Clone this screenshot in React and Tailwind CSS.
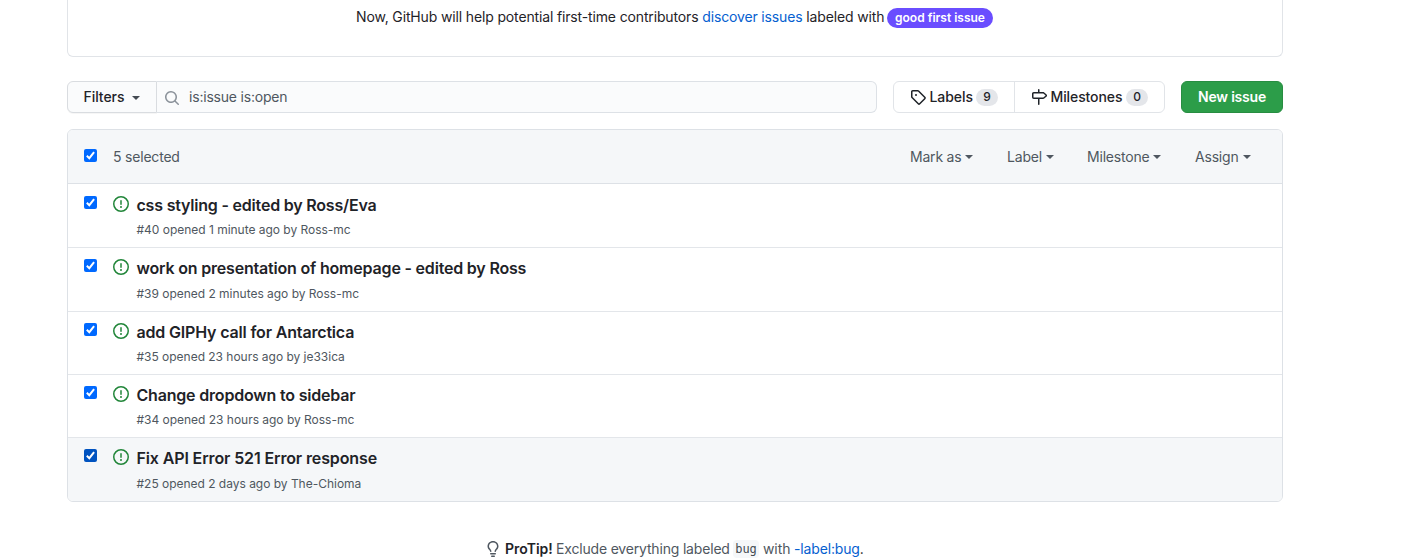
import React from "react";

const PATHS = {
  issue:
    "M8 1.5a6.5 6.5 0 100 13 6.5 6.5 0 000-13zM0 8a8 8 0 1116 0A8 8 0 010 8zm9 3a1 1 0 11-2 0 1 1 0 012 0zm-.25-6.25a.75.75 0 00-1.5 0v3.5a.75.75 0 001.5 0v-3.5z",
  tag: "M2.5 7.775V2.75a.25.25 0 01.25-.25h5.025a.25.25 0 01.177.073l6.25 6.25a.25.25 0 010 .354l-5.025 5.025a.25.25 0 01-.354 0l-6.25-6.25a.25.25 0 01-.073-.177zm-1.5 0V2.75C1 1.784 1.784 1 2.75 1h5.025c.464 0 .91.184 1.238.513l6.25 6.25a1.75 1.75 0 010 2.474l-5.026 5.026a1.75 1.75 0 01-2.474 0l-6.25-6.25A1.75 1.75 0 011 7.775zM6 5a1 1 0 100 2 1 1 0 000-2z",
  milestone:
    "M7.75 0a.75.75 0 01.75.75V3h3.634c.414 0 .814.147 1.13.414l2.07 1.75a1.75 1.75 0 010 2.672l-2.07 1.75a1.75 1.75 0 01-1.13.414H8.5v5.25a.75.75 0 11-1.5 0V10H2.75A1.75 1.75 0 011 8.25v-3.5C1 3.784 1.784 3 2.75 3H7V.75A.75.75 0 017.75 0zm0 8.5h4.384a.25.25 0 00.161-.06l2.07-1.75a.25.25 0 000-.38l-2.07-1.75a.25.25 0 00-.161-.06H2.75a.25.25 0 00-.25.25v3.5c0 .138.112.25.25.25h5z",
  search:
    "M11.5 7a4.499 4.499 0 11-8.998 0A4.499 4.499 0 0111.5 7zm-.82 4.74a6 6 0 111.06-1.06l3.04 3.04a.75.75 0 11-1.06 1.06l-3.04-3.04z",
  bulb: "M8 1.5c-2.363 0-4 1.69-4 3.75 0 .984.424 1.625.984 2.304l.214.253c.223.264.47.556.673.848.284.411.537.896.621 1.49a.75.75 0 01-1.484.211c-.04-.282-.163-.547-.37-.847a8.695 8.695 0 00-.542-.68c-.084-.1-.173-.205-.268-.32C3.201 7.75 2.5 6.766 2.5 5.25 2.5 2.31 4.863 0 8 0s5.5 2.31 5.5 5.25c0 1.516-.701 2.5-1.328 3.259-.095.115-.184.22-.268.319-.207.245-.383.453-.541.681-.208.3-.33.565-.37.847a.75.75 0 01-1.485-.212c.084-.593.337-1.078.621-1.489.203-.292.45-.584.673-.848.075-.088.147-.173.213-.253.561-.679.985-1.32.985-2.304 0-2.06-1.637-3.75-4-3.75zM6 15.25a.75.75 0 01.75-.75h2.5a.75.75 0 010 1.5h-2.5a.75.75 0 01-.75-.75zM5.75 12a.75.75 0 000 1.5h4.5a.75.75 0 000-1.5h-4.5z",
};

function Icon({ name, className }) {
  return (
    <svg viewBox="0 0 16 16" fill="currentColor" className={`size-4 shrink-0 ${className || ""}`}>
      <path fillRule="evenodd" d={PATHS[name]} />
    </svg>
  );
}

function Caret({ className }) {
  return (
    <svg viewBox="0 0 8 4" fill="currentColor" className={`h-1 w-2 shrink-0 ${className || ""}`}>
      <path d="M0 0h8L4 4z" />
    </svg>
  );
}

function Checkbox({ active }) {
  return (
    <span
      role="checkbox"
      aria-checked="true"
      className={`block size-[13px] shrink-0 rounded-[2px] ${active ? "bg-[#0053c0]" : "bg-[#0069ff]"}`}
    >
      <svg viewBox="0 0 13 13" fill="none" stroke="#fff" strokeWidth="2" className="size-[13px]">
        <path d="M2.8 6.8 5.3 9.2 10.1 3.2" />
      </svg>
    </span>
  );
}

const MENUS = [
  { label: "Mark as", width: "w-[97px]" },
  { label: "Label", width: "w-[80px]" },
  { label: "Milestone", width: "w-[108px]" },
  { label: "Assign", width: "w-[57px]" },
];

const ISSUES = [
  { title: "css styling - edited by Ross/Eva", meta: "#40 opened 1 minute ago by Ross-mc", row: "h-16 pt-3", metaTop: "mt-[6px]", tracking: "tracking-[-0.2px]" },
  { title: "work on presentation of homepage - edited by Ross", meta: "#39 opened 2 minutes ago by Ross-mc", row: "h-16 pt-[11px]", metaTop: "mt-[7px]", tracking: "tracking-[-0.19px]" },
  { title: "add GIPHy call for Antarctica", meta: "#35 opened 23 hours ago by je33ica", row: "h-[63px] pt-[11px]", metaTop: "mt-[6px]", tracking: "tracking-[-0.17px]" },
  { title: "Change dropdown to sidebar", meta: "#34 opened 23 hours ago by Ross-mc", row: "h-[63px] pt-[11px]", metaTop: "mt-[6px]", tracking: "tracking-[-0.19px]" },
  { title: "Fix API Error 521 Error response", meta: "#25 opened 2 days ago by The-Chioma", row: "h-[63px] pt-[11px]", metaTop: "mt-[7px]", tracking: "tracking-[-0.13px]", active: true },
];

function IssueRow({ issue, last }) {
  return (
    <li
      className={`flex items-start pl-4 ${issue.row} ${last ? "" : "border-b border-[#e3e6ea]"} ${
        issue.active ? "bg-[#f5f7f9]" : ""
      }`}
    >
      <Checkbox active={issue.active} />
      <Icon name="issue" className="ml-4 text-[#22863a]" />
      <div className="-mt-px ml-[7.5px]">
        <a className={`block text-base leading-5 font-semibold text-[#1f2328] ${issue.tracking}`}>{issue.title}</a>
        <div className={`pt-px text-xs leading-4 tracking-[-0.02px] text-[#4f5760] ${issue.metaTop}`}>{issue.meta}</div>
      </div>
    </li>
  );
}

export default function App() {
  return (
    <main className="h-[558px] overflow-hidden bg-white font-['Inter','Liberation_Sans',sans-serif] text-sm whitespace-nowrap text-[#1f2328]">
      <div className="ml-[67px] w-[1216px]">
        <section className="flex h-[57px] items-start rounded-b-md border-x border-b border-[#e1e4e8] pt-[7px] pl-[288px]">
          <p className="w-[531px] leading-5 tracking-[-0.145px]">
            Now, GitHub will help potential first-time contributors <a className="text-[#0560d0]">discover issues</a>{" "}
            labeled with
          </p>
          <span className="mt-px flex h-5 w-[106px] items-center justify-center rounded-full bg-[#6a4dff] text-xs font-semibold text-white">
            good first issue
          </span>
        </section>

        <div className="mt-6 flex h-8 leading-5">
          <button className="flex w-[90px] items-center rounded-l-md border border-[#d9dce0] bg-[#fafbfc] pl-[15.5px] font-medium shadow-[0_1px_0_rgba(27,31,35,0.04)]">
            <span className="w-[48.5px] text-left tracking-[-0.05px]">Filters</span>
            <Caret className="mt-px text-[#444b52]" />
          </button>
          <div className="flex w-[720px] items-center rounded-r-md border border-l-0 border-[#dde1e6] bg-[#fafbfc] pl-[7px] text-[#4f5760]">
            <Icon name="search" className="mt-px text-[#8b929a]" />
            <span className="ml-[9px] tracking-[-0.2px]">is:issue is:open</span>
          </div>
          <div className="ml-4 flex w-[272px] rounded-md border border-[#e1e4e8] font-medium">
            <a className="flex w-[121px] items-center border-r border-[#e1e4e8] pl-4">
              <Icon name="tag" />
              <span className="ml-[3.5px] w-[46.5px] tracking-[-0.05px]">Labels</span>
              <span className="flex h-[17px] w-[22px] items-center justify-center rounded-full bg-[#e4e6ea] text-xs">9</span>
            </a>
            <a className="flex flex-1 items-center pl-4">
              <Icon name="milestone" />
              <span className="ml-[3.5px] w-[75.5px] tracking-[-0.1px]">Milestones</span>
              <span className="flex h-[17px] w-[22px] items-center justify-center rounded-full bg-[#e4e6ea] text-xs">0</span>
            </a>
          </div>
          <button className="ml-4 flex w-[102px] items-center justify-center rounded-md border border-[#278d41] bg-[#2c9d49] font-semibold tracking-[-0.2px] text-white">
            New issue
          </button>
        </div>

        <section className="mt-4 h-[373px] overflow-hidden rounded-md border border-[#dde1e6]">
          <header className="flex h-[54px] items-center border-b border-[#dde1e6] bg-[#f5f7f9] pl-4 text-[#4f5760]">
            <div className="mb-[3px]"><Checkbox /></div>
            <span className="ml-4 tracking-[-0.2px]">5 selected</span>
            <nav className="mr-[30px] ml-auto flex tracking-[-0.2px]">
              {MENUS.map((menu) => (
                <span key={menu.label} className={`flex items-center gap-1 ${menu.width}`}>
                  {menu.label}
                  <Caret className="mt-px" />
                </span>
              ))}
            </nav>
          </header>
          <ul>
            {ISSUES.map((issue, i) => (
              <IssueRow key={issue.meta} issue={issue} last={i === ISSUES.length - 1} />
            ))}
          </ul>
        </section>

        <footer className="mt-[37px] flex h-5 items-center pl-[418px] leading-5 text-[#4f5760]">
          <Icon name="bulb" />
          <span className="ml-1 w-[51px] font-semibold text-[#1f2328]">ProTip!</span>
          <span className="w-[177px] tracking-[-0.18px]">Exclude everything labeled</span>
          <code className="flex h-[18px] w-[26px] items-center justify-center rounded bg-[#f5f7f9] font-['DejaVu_Sans_Mono',monospace] text-xs text-[#444b52]">
            bug
          </code>
          <span className="ml-1 w-[31px] tracking-[-0.1px]">with</span>
          <span className="tracking-[-0.15px] text-[#1f2328]">
            <a className="text-[#0560d0]">-label:bug</a>.
          </span>
        </footer>
      </div>
    </main>
  );
}
